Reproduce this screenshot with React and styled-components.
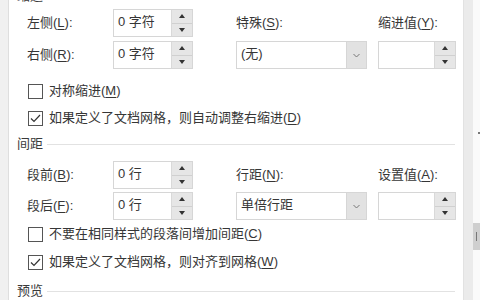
import React from 'react';
import styled, { createGlobalStyle } from 'styled-components';

const GlobalStyle = createGlobalStyle`
  html, body {
    margin: 0;
    padding: 0;
    background: #ffffff;
  }
  body {
    font-family: "Liberation Sans", "Noto Sans CJK SC", sans-serif;
    font-size: 13px;
    color: #363636;
  }
`;

const Window = styled.div`
  width: 480px;
  height: 300px;
  display: flex;
  overflow: hidden;
  background: #ffffff;
`;

const LeftEdge = styled.div`
  width: 8px;
  flex-shrink: 0;
  background: #f0f0f0;
  border-right: 1px solid #dedede;
`;

const Content = styled.div`
  width: 454px;
  flex-shrink: 0;
  display: flex;
  flex-direction: column;
`;

const RightEdge = styled.div`
  flex: 1;
  display: flex;
`;

const EdgeBand = styled.div`
  width: 9px;
  background: #ebebeb;
  border-left: 1px solid #e2e2e2;
`;

const ScrollTrack = styled.div`
  flex: 1;
  display: flex;
  flex-direction: column;
  align-items: flex-end;
  background: #fafafa;
`;

const ScrollDot = styled.div`
  width: 2px;
  height: 2px;
  margin-top: 132px;
  background: #777;
`;

const ScrollThumb = styled.div`
  width: 7px;
  height: 27px;
  margin-top: 89px;
  background: #cfcfcf;
  display: flex;
  align-items: center;
  justify-content: center;

  &::after {
    content: '';
    width: 1px;
    height: 9px;
    background: #777;
  }
`;

const Heading = styled.div`
  display: flex;
  align-items: center;
  gap: 4px;
  height: 18px;
  padding-left: 8px;
  margin-top: ${({ $mt }) => $mt}px;
  line-height: 18px;
  color: #3a3a3a;

  &::after {
    content: '';
    flex: 1;
    height: 1px;
    margin-right: 8px;
    background: #e2e2e2;
  }
`;

const FieldGrid = styled.div`
  display: grid;
  grid-template-columns: 86px 80px 43px 131px 11px 78px;
  grid-template-rows: 28px 28px;
  row-gap: ${({ $gap }) => $gap}px;
  padding-left: 18px;
  margin-top: ${({ $mt }) => $mt}px;
  align-items: center;
`;

const Label = styled.span`
  grid-column: ${({ $col }) => $col};
  white-space: nowrap;
  line-height: 18px;
`;

const Key = styled.span`
  text-decoration: underline;
  text-underline-offset: 2px;
`;

const InputBox = styled.div`
  grid-column: ${({ $col }) => $col};
  height: 26px;
  display: flex;
  border: 1px solid #d6d6d6;
  background: #ffffff;
`;

const InputText = styled.span`
  flex: 1;
  padding-left: 4px;
  line-height: 24px;
  white-space: nowrap;
`;

const Spinner = styled.div`
  width: 20px;
  display: flex;
  flex-direction: column;
  background: #e6e6e6;
  border-left: 1px solid #d9d9d9;
`;

const SpinHalf = styled.div`
  flex: 1;
  display: flex;
  align-items: center;
  justify-content: center;

  & + & {
    border-top: 1px solid #d0d0d0;
  }

  &::before {
    content: '';
    border-left: 3px solid transparent;
    border-right: 3px solid transparent;
    ${({ $down }) =>
      $down ? 'border-top: 4px solid #333;' : 'border-bottom: 4px solid #333;'}
  }
`;

const Select = styled.div`
  grid-column: 4;
  height: 26px;
  display: flex;
  border: 1px solid #d6d6d6;
  background: #ffffff;
`;

const SelectArrow = styled.div`
  width: 19px;
  display: flex;
  align-items: center;
  justify-content: center;
  background: #e2e2e2;
  border-left: 1px solid #d6d6d6;
`;

const CheckRow = styled.label`
  display: flex;
  align-items: center;
  gap: 6px;
  height: 20px;
  padding-left: 19px;
  margin-top: ${({ $mt }) => $mt}px;
  white-space: nowrap;
`;

const CheckText = styled.span`
  line-height: 18px;
`;

const Box = styled.span`
  width: 13px;
  height: 13px;
  border: 1px solid #555;
  background: #fff;
  display: flex;
  align-items: center;
  justify-content: center;
  flex-shrink: 0;
`;

const Spin = () => (
  <Spinner>
    <SpinHalf />
    <SpinHalf $down />
  </Spinner>
);

const Num = ({ col, value }) => (
  <InputBox $col={col}>
    <InputText>{value}</InputText>
    <Spin />
  </InputBox>
);

const Dropdown = ({ value }) => (
  <Select>
    <InputText>{value}</InputText>
    <SelectArrow>
      <svg width="7" height="5" viewBox="0 0 7 5">
        <path d="M0.5 1 L3.5 4 L6.5 1" fill="none" stroke="#777" strokeWidth="1" />
      </svg>
    </SelectArrow>
  </Select>
);

const Check = ({ checked, mt, children }) => (
  <CheckRow $mt={mt}>
    <Box>
      {checked && (
        <svg width="11" height="9" viewBox="0 0 11 9">
          <path d="M1 4.5 L4 7.5 L10 1" fill="none" stroke="#333" strokeWidth="1.2" />
        </svg>
      )}
    </Box>
    <CheckText>{children}</CheckText>
  </CheckRow>
);

const App = () => (
  <>
    <GlobalStyle />
    <Window>
      <LeftEdge />
      <Content>
        <Heading $mt={-13}>缩进</Heading>
        <FieldGrid $mt={4} $gap={4}>
          <Label $col={1}>左侧(<Key>L</Key>):</Label>
          <Num col={2} value="0 字符" />
          <Label $col={4}>特殊(<Key>S</Key>):</Label>
          <Label $col={6}>缩进值(<Key>Y</Key>):</Label>
          <Label $col={1}>右侧(<Key>R</Key>):</Label>
          <Num col={2} value="0 字符" />
          <Dropdown value="(无)" />
          <Num col={6} value="" />
        </FieldGrid>
        <Check mt={12}>对称缩进(<Key>M</Key>)</Check>
        <Check checked mt={7}>
          如果定义了文档网格，则自动调整右缩进(<Key>D</Key>)
        </Check>
        <Heading $mt={7}>间距</Heading>
        <FieldGrid $mt={8} $gap={3}>
          <Label $col={1}>段前(<Key>B</Key>):</Label>
          <Num col={2} value="0 行" />
          <Label $col={4}>行距(<Key>N</Key>):</Label>
          <Label $col={6}>设置值(<Key>A</Key>):</Label>
          <Label $col={1}>段后(<Key>F</Key>):</Label>
          <Num col={2} value="0 行" />
          <Dropdown value="单倍行距" />
          <Num col={6} value="" />
        </FieldGrid>
        <Check mt={4}>不要在相同样式的段落间增加间距(<Key>C</Key>)</Check>
        <Check checked mt={8}>
          如果定义了文档网格，则对齐到网格(<Key>W</Key>)
        </Check>
        <Heading $mt={10}>预览</Heading>
      </Content>
      <RightEdge>
        <EdgeBand />
        <ScrollTrack>
          <ScrollDot />
          <ScrollThumb />
        </ScrollTrack>
      </RightEdge>
    </Window>
  </>
);

export default App;
